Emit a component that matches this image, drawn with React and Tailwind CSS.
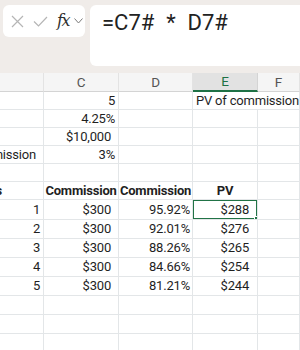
import React from 'react';

const cols = ['w-[44px]', 'w-[75px]', 'w-[74px]', 'w-[65px]', 'w-[42px]'];

// each row: [left, C, D, E, F] ; strings or {t, b (bold), c (center), pr}
const rows = [
  { h: 'h-[18px]', cells: ['', { t: '5', pr: 'pr-[3px]' }, '', { t: 'PV of commission payments', over: true }, ''] },
  { h: 'h-[18px]', cells: ['', { t: '4.25%', pr: 'pr-[3px]' }, '', '', ''] },
  { h: 'h-[18px]', cells: ['', { t: '$10,000', pr: 'pr-[7px]' }, '', '', ''] },
  { h: 'h-[18px]', cells: [{ t: 'Rate of Commission', pr: 'pr-[7px]' }, { t: '3%', pr: 'pr-[3px]' }, '', '', ''] },
  { h: 'h-[18px]', cells: ['', '', '', '', ''] },
  { h: 'h-[18px]', cells: [{ t: 'Years', b: true, pr: 'pr-[41px]' }, { t: 'Commission', b: true, c: true }, { t: 'Commission', b: true, c: true }, { t: 'PV', b: true, c: true }, ''] },
  { h: 'h-[20px]', sel: 'first', cells: [{ t: '1', pr: 'pr-[3px]' }, { t: '$300', pr: 'pr-[7px]' }, { t: '95.92%', pr: 'pr-[2px]' }, { t: '$288', pr: 'pr-[8px]' }, ''] },
  { h: 'h-[19px]', sel: 'mid', cells: [{ t: '2', pr: 'pr-[3px]' }, { t: '$300', pr: 'pr-[7px]' }, { t: '92.01%', pr: 'pr-[2px]' }, { t: '$276', pr: 'pr-[8px]' }, ''] },
  { h: 'h-[19px]', sel: 'mid', cells: [{ t: '3', pr: 'pr-[3px]' }, { t: '$300', pr: 'pr-[7px]' }, { t: '88.26%', pr: 'pr-[2px]' }, { t: '$265', pr: 'pr-[8px]' }, ''] },
  { h: 'h-[19px]', sel: 'mid', cells: [{ t: '4', pr: 'pr-[3px]' }, { t: '$300', pr: 'pr-[7px]' }, { t: '84.66%', pr: 'pr-[2px]' }, { t: '$254', pr: 'pr-[8px]' }, ''] },
  { h: 'h-[19px]', sel: 'last', cells: [{ t: '5', pr: 'pr-[3px]' }, { t: '$300', pr: 'pr-[7px]' }, { t: '81.21%', pr: 'pr-[2px]' }, { t: '$244', pr: 'pr-[8px]' }, ''] },
  { h: 'h-[19px]', cells: ['', '', '', '', ''] },
  { h: 'h-[19px]', cells: ['', '', '', '', ''] },
  { h: 'h-[19px]', cells: ['', '', '', '', ''] },
];

function Cell({ cell, i, row }) {
  const c = typeof cell === 'string' ? { t: cell } : cell;
  const isE = i === 3;
  let extra = 'border-r border-b border-[#e3e6e8] overflow-hidden';
  if (c.over) extra = 'border-b border-[#e3e6e8] overflow-visible z-10';
  const selBox = isE && row.sel;
  return (
    <div className={`relative shrink-0 flex items-center whitespace-nowrap ${cols[i]} ${extra} ${c.c ? 'justify-center' : c.over ? 'justify-start pl-[3px]' : 'justify-end'} ${c.pr || ''} ${c.b ? 'font-bold' : ''}`}>
      <span className="relative z-10">{c.t}</span>
      {selBox === 'first' && (
        <div className="absolute -left-px -top-px right-[-1px] bottom-[-1px] border-2 border-[#217346] z-20">
          <div className="absolute -right-[3px] -bottom-[3px] w-[5px] h-[5px] bg-[#217346] border border-white" />
        </div>
      )}
      {(selBox === 'mid' || selBox === 'last') && (
        <div className={`absolute -left-px top-0 -right-px ${selBox === 'last' ? 'bottom-[-1px] border-b' : 'bottom-0'} border-l border-r border-[#9fb4e0] z-0`} />
      )}
    </div>
  );
}

export default function App() {
  return (
    <div className="w-[300px] h-[350px] overflow-hidden bg-white text-[13px] tracking-[-0.2px] text-[#1f1f1f] font-['Roboto',sans-serif]">
      {/* formula bar */}
      <div className="h-[73px] bg-[#f0ece9] flex items-start pt-[5px] pl-[3px] gap-[5px]">
        <div className="w-[82px] h-[32px] bg-white rounded-md flex items-center pl-[8px]">
          <svg width="13" height="13" viewBox="0 0 13 13" className="text-[#b5b5b5]">
            <path d="M1 1 L12 12 M12 1 L1 12" stroke="currentColor" strokeWidth="1.2" fill="none" />
          </svg>
          <svg width="15" height="11" viewBox="0 0 15 11" className="ml-[9px] text-[#b5b5b5]">
            <path d="M1 5.5 L5.5 10 L14 1" stroke="currentColor" strokeWidth="1.2" fill="none" />
          </svg>
          <span className="ml-[9px] italic font-['DejaVu_Serif',serif] text-[16px] text-[#2f2f2f] leading-none tracking-[-1.5px]">fx</span>
          <svg width="9" height="6" viewBox="0 0 9 6" className="ml-[5px] text-[#7a7a7a]">
            <path d="M0.5 0.5 L4.5 5 L8.5 0.5" stroke="currentColor" strokeWidth="1" fill="none" />
          </svg>
        </div>
        <div className="flex-1 h-[61px] bg-white rounded-l-md pl-[12px] pt-[3px] text-[22px] tracking-normal [word-spacing:-1.5px] text-[#222] whitespace-pre leading-[30px]">
          {'=C7#   *   D7#'}
        </div>
      </div>
      {/* column headers */}
      <div className="flex h-[19px] bg-[#f5f5f5] text-[13.5px] text-[#555]">
        {['', 'C', 'D', 'E', 'F'].map((l, i) => (
          <div
            key={i}
            className={`shrink-0 flex items-center justify-center ${cols[i]} ${i === 3 ? 'bg-[#e2e2e2] text-[#1e7145] border-b-2 border-b-[#1e7145] border-r border-r-[#d4d4d4]' : 'border-b border-b-[#d4d4d4] border-r border-r-[#e3e3e3]'}`}
          >
            {l}
          </div>
        ))}
      </div>
      {rows.map((row, r) => (
        <div key={r} className={`flex ${row.h}`}>
          {row.cells.map((cell, i) => (
            <Cell key={i} cell={cell} i={i} row={row} />
          ))}
        </div>
      ))}
    </div>
  );
}
